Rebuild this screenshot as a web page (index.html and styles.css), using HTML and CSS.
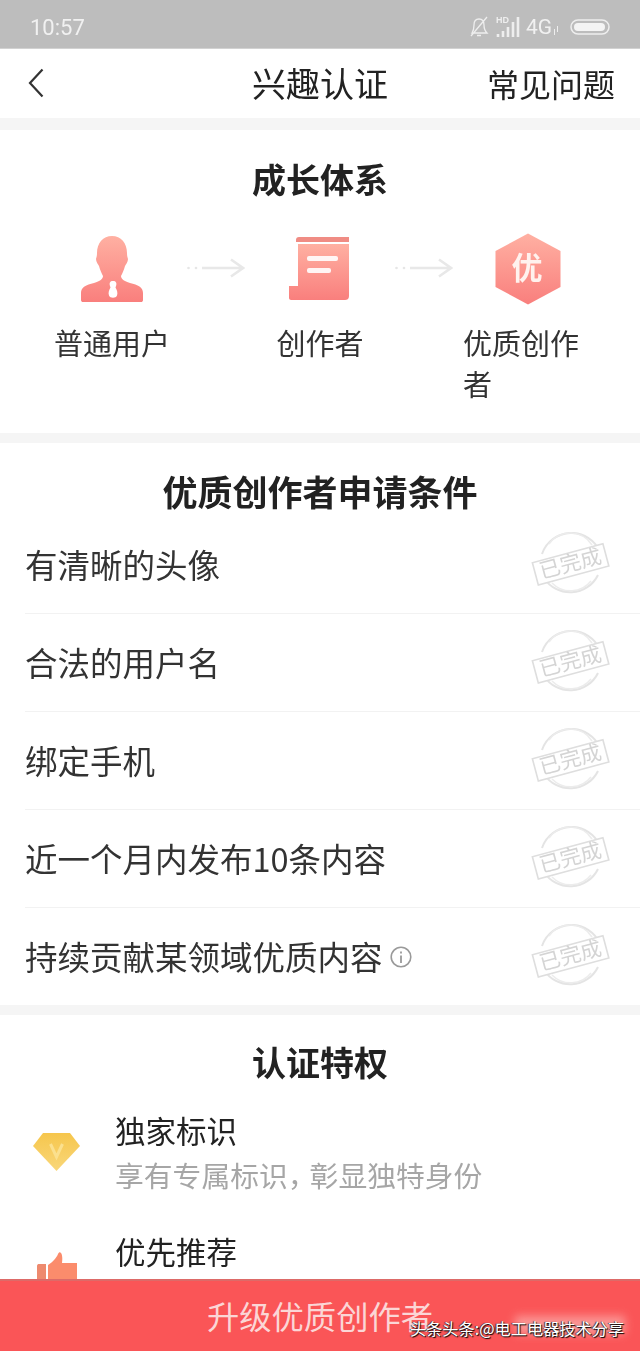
FILE: index.html
```html
<!DOCTYPE html>
<html lang="zh-CN">
<head>
<meta charset="utf-8">
<title>兴趣认证</title>
<link rel="stylesheet" href="styles.css">
</head>
<body>
<svg class="defs" width="0" height="0" aria-hidden="true">
  <defs>
    <linearGradient id="pink" x1="0" y1="0" x2="0" y2="1">
      <stop offset="0" stop-color="#ffb0a2"/>
      <stop offset="1" stop-color="#f97f7d"/>
    </linearGradient>
    <linearGradient id="gold" x1="0" y1="0" x2="0" y2="1">
      <stop offset="0" stop-color="#f6c64c"/>
      <stop offset="1" stop-color="#f9d77a"/>
    </linearGradient>
    <symbol id="arrow" viewBox="0 0 58 20">
      <circle cx="1.5" cy="10" r="1.3" fill="#e6e6e6"/>
      <circle cx="9" cy="10" r="1.3" fill="#e6e6e6"/>
      <path d="M15 10H55M44 1.5L56 10L44 18.5" fill="none" stroke="#e8e8e8" stroke-width="2.6"/>
    </symbol>
    <symbol id="stamp" viewBox="0 0 80 64">
      <path d="M12 22A31 31 0 0 1 70 20M68 43A31 31 0 0 1 14 46" fill="none" stroke="#e4e4e4" stroke-width="2"/>
      <path d="M19 12A26 26 0 0 1 62 13M61 49A26 26 0 0 1 22 51" fill="none" stroke="#ececec" stroke-width="1.5"/>
      <g transform="rotate(-15 40 32)">
        <rect x="4" y="21" width="73" height="23" fill="#fff" stroke="#dedede" stroke-width="1.6"/>
        <text x="40.5" y="39" text-anchor="middle" class="stamp-text">已完成</text>
      </g>
    </symbol>
  </defs>
</svg>

<header class="status">
  <span class="time">10:57</span>
  <div class="status-icons">
    <svg class="ic-bell" viewBox="0 0 20 22" width="20" height="22"><path d="M3 17C5 14 5 12 5 9C5 5 7 3 10 3C13 3 15 5 15 9C15 12 15 14 18 17ZM8 19.5H12M2 20L18 1" fill="none" stroke="#eee" stroke-width="1.3"/></svg>
    <svg class="ic-signal" viewBox="0 0 26 24" width="26" height="24">
      <text x="0" y="8" class="hd">HD</text>
      <path d="M2 22V19M7 22V16M12 22V12M17 22V7M22 22V2" stroke="#eee" stroke-width="2.6" fill="none"/>
    </svg>
    <span class="net">4G</span>
    <svg class="ic-updown" viewBox="0 0 6 12" width="6" height="12"><path d="M1.5 11V5M4.5 8V2" stroke="#eee" stroke-width="1"/></svg>
    <svg class="ic-batt" viewBox="0 0 40 16" width="40" height="16"><rect x="1" y="1" width="38" height="14" rx="7" fill="none" stroke="#eee" stroke-width="1.5"/><rect x="4" y="4" width="31" height="8" rx="4" fill="#f4f4f4"/></svg>
  </div>
</header>

<nav class="nav">
  <svg class="back" viewBox="0 0 16 30" width="16" height="30"><path d="M14.500 1.500L2 15L14.500 28.500" fill="none" stroke="#333" stroke-width="2.2"/></svg>
  <h1 class="nav-title">兴趣认证</h1>
  <a class="nav-link">常见问题</a>
</nav>

<section class="card growth">
  <h2 class="card-title">成长体系</h2>
  <div class="steps">
    <div class="step">
      <svg class="step-icon" viewBox="0 0 64 72" width="64" height="72">
        <path fill="url(#pink)" d="M32 3C41 3 47 10 47 20C47 23 47.500 24 48 26C48 29 46 31 45 33C44 37 42 41 41 43C41 46 44 48 50 50C58 52 63 54 63 60V67C63 68.500 62 69 61 69H3C2 69 1 68.500 1 67V60C1 54 6 52 14 50C20 48 23 46 23 43C22 41 20 37 19 33C18 31 16 29 16 26C16.500 24 17 23 17 20C17 10 23 3 32 3Z"/>
        <path fill="#fff" d="M33 48C36 48 37 50 36 53L35.500 54.500C37 57 38 60 37 62.500C36 65.500 30 65.500 29 62.500C28 60 29 57 30.500 54.500L30 53C29 50 30 48 33 48Z"/>
      </svg>
      <span class="step-label">普通用户</span>
    </div>
    <svg class="arrow arrow-a"><use href="#arrow"/></svg>
    <div class="step">
      <svg class="step-icon doc" viewBox="0 0 60 72" width="60" height="72">
        <path fill="#f08c84" d="M7 7C7 5 8 4 10 4H60V9H7Z"/>
        <path fill="url(#pink)" d="M9 11H60V63C60 66 58 67 56 67H2C1 67 0 66 0 65V53H9Z"/>
        <rect x="18" y="23" width="31" height="5" rx="2" fill="#fff" opacity=".9"/>
        <rect x="18" y="35" width="24" height="5" rx="2" fill="#fff" opacity=".9"/>
      </svg>
      <span class="step-label">创作者</span>
    </div>
    <svg class="arrow arrow-b"><use href="#arrow"/></svg>
    <div class="step step-last">
      <svg class="step-icon hex" viewBox="0 0 66 72" width="66" height="72">
        <path fill="url(#pink)" d="M33 0.500L65.500 18V54L33 71.500L0.500 54V18Z"/>
        <text x="32" y="46" text-anchor="middle" class="hex-text">优</text>
      </svg>
      <span class="step-label">优质创作者</span>
    </div>
  </div>
</section>

<section class="card conditions">
  <h2 class="card-title wide">优质创作者申请条件</h2>
  <ul class="cond-list">
    <li class="cond"><span class="cond-text">有清晰的头像</span><svg class="stamp"><use href="#stamp"/></svg></li>
    <li class="cond"><span class="cond-text">合法的用户名</span><svg class="stamp"><use href="#stamp"/></svg></li>
    <li class="cond"><span class="cond-text">绑定手机</span><svg class="stamp"><use href="#stamp"/></svg></li>
    <li class="cond"><span class="cond-text">近一个月内发布10条内容</span><svg class="stamp"><use href="#stamp"/></svg></li>
    <li class="cond"><span class="cond-text">持续贡献某领域优质内容<svg class="info" viewBox="0 0 22 22" width="22" height="22"><circle cx="11" cy="11" r="9.800" fill="none" stroke="#9a9a9a" stroke-width="1.6"/><path d="M11 9.500V17M11 5.500V7.500" stroke="#9a9a9a" stroke-width="1.8"/></svg></span><svg class="stamp"><use href="#stamp"/></svg></li>
  </ul>
</section>

<section class="card perks">
  <h2 class="card-title">认证特权</h2>
  <div class="perk">
    <svg class="perk-icon" viewBox="0 0 47 40" width="47" height="40">
      <path fill="url(#gold)" d="M10 1H37L47 14L23.500 39L0 14Z"/>
      <path d="M17.500 12L23.500 25L29.500 12" fill="none" stroke="#fbe08e" stroke-width="3"/>
    </svg>
    <div class="perk-body">
      <div class="perk-title">独家标识</div>
      <div class="perk-sub">享有专属标识<span class="tight">，</span>彰显独特身份</div>
    </div>
  </div>
  <div class="perk">
    <svg class="perk-icon thumb" viewBox="0 0 40 40" width="40" height="40">
      <path fill="#ee8a6e" d="M0 14C0 12.500 1 12 2 12H9V40H0Z"/>
      <path fill="#fb8c6c" d="M11 13C16 10 20 5 21 2C22 0 23 -0.500 24 1C25.500 3 25.500 7 25 11H40V40H11Z"/>
    </svg>
    <div class="perk-body">
      <div class="perk-title">优先推荐</div>
    </div>
  </div>
</section>

<button class="cta">升级优质创作者</button>
<div class="mark-ghost"></div>
<div class="watermark">头条头条:@电工电器技术分享</div>
</body>
</html>
```
FILE: styles.css
```css
* { box-sizing: border-box; }
html, body { margin: 0; padding: 0; }
body {
  position: relative;
  width: 640px;
  height: 1351px;
  overflow: hidden;
  background: #f5f5f5;
  color: #222;
  font-family: "Noto Sans CJK SC", "Noto Sans", sans-serif;
  filter: blur(.4px);
}
h1, h2, ul { margin: 0; padding: 0; list-style: none; }
.defs { position: absolute; }
.stamp-text { font-size: 21px; fill: #d4d4d4; font-family: "Noto Sans CJK SC", sans-serif; }
.hex-text { font-size: 31px; font-weight: 700; fill: #fff2ee; font-family: "Noto Sans CJK SC", sans-serif; }
.hd { font-size: 9px; font-weight: 700; fill: #eee; font-family: "Liberation Sans", sans-serif; }

.status {
  height: 49px;
  background: #bdbdbd;
  border-bottom: 1px solid #d2d2d2;
  display: flex;
  align-items: center;
  justify-content: space-between;
  padding: 6px 30px 0 30px;
  color: #f1f1f1;
}
.time { font: 22px Roboto, sans-serif; }
.status-icons { display: flex; align-items: center; }
.ic-bell { margin-right: 7px; }
.ic-signal { margin-right: 4px; }
.net { font: 21px Roboto, sans-serif; margin-right: 1px; }
.ic-updown { margin: 6px 11px 0 0; }

.nav {
  height: 69px;
  background: #fff;
  display: grid;
  grid-template-columns: 1fr auto 1fr;
  align-items: center;
  padding: 0 25px;
}
.back { display: block; margin: -2px 0 0 3px; }
.nav-title {
  font-size: 34px;
  font-weight: 400;
  line-height: 46px;
  margin-bottom: 2px;
  color: #222;
}
.nav-link {
  justify-self: end;
  font-size: 32px;
  line-height: 46px;
  margin-bottom: 2px;
  color: #222;
}

.card { background: #fff; }
.card-title {
  font-size: 34px;
  font-weight: 700;
  line-height: 42px;
  text-align: center;
  color: #222;
}
.card-title.wide { font-size: 35px; }

.growth { margin-top: 12px; padding: 28px 0 29px; }
.steps { display: flex; align-items: flex-start; margin-top: 33px; padding-left: 54px; }
.step { width: 116px; display: flex; flex-direction: column; align-items: center; flex: none; }
.step-icon { display: block; height: 72px; }
.step-label { font-size: 29px; line-height: 41px; margin-top: 17px; color: #333; width: 116px; text-align: center; }
.step-last .step-label { text-align: left; }
.doc { margin-right: 2px; }
.hex { margin-left: 14px; }
.arrow { width: 58px; height: 20px; flex: none; }
.arrow-a { margin: 25px 17px 0 17px; }
.arrow-b { margin: 25px 10px 0 17px; }

.conditions { margin-top: 10px; padding: 27px 0 0; }
.cond-list { margin-top: 4px; margin-left: 25px; }
.cond {
  height: 98px;
  display: flex;
  align-items: center;
  justify-content: space-between;
  padding-right: 30px;
  font-size: 32.5px;
  color: #333;
  border-bottom: 1px solid #f2f2f2;
}
.cond:last-child { height: 97px; border-bottom: 0; }
.cond-text { display: flex; align-items: center; margin-bottom: 2px; }
.info { margin-left: 7px; margin-top: 2px; }
.stamp { width: 80px; height: 64px; flex: none; margin-bottom: 1px; }

.perks { margin-top: 10px; padding: 26px 0 0 33px; height: 400px; }
.perks .card-title { margin-left: -33px; }
.perk { display: flex; align-items: flex-start; height: 121px; }
.perks .card-title + .perk { margin-top: 27px; }
.perk-icon { flex: none; margin-top: 22px; margin-right: 35px; }
.perk-icon.thumb { margin: 21px 38px 0 4px; }
.perk-title { font-size: 30.5px; line-height: 40px; color: #222; }
.perk-sub { font-size: 28.8px; line-height: 44px; margin-top: 3px; color: #a6a6a6; }
.tight { letter-spacing: -7px; }

.cta {
  position: absolute;
  left: 0;
  bottom: 0;
  width: 640px;
  height: 72px;
  margin: 0;
  border: 0;
  border-top: 2px solid #dd6a68;
  background: #fa5557;
  color: #fbd6d6;
  font-family: "Noto Sans CJK SC", sans-serif;
  font-size: 32.3px;
  text-align: center;
  padding: 0 0 2px;
}
.mark-ghost {
  position: absolute;
  left: 515px;
  top: 1316px;
  width: 110px;
  height: 18px;
  background: #fbb3b0;
  filter: blur(5px);
  opacity: .7;
}
.watermark {
  position: absolute;
  left: 410px;
  top: 1316px;
  font-size: 16.2px;
  line-height: 24px;
  white-space: nowrap;
  color: #fff;
  text-shadow: 1px 1px 1px #000, -1px 0 1px #333;
}
```
